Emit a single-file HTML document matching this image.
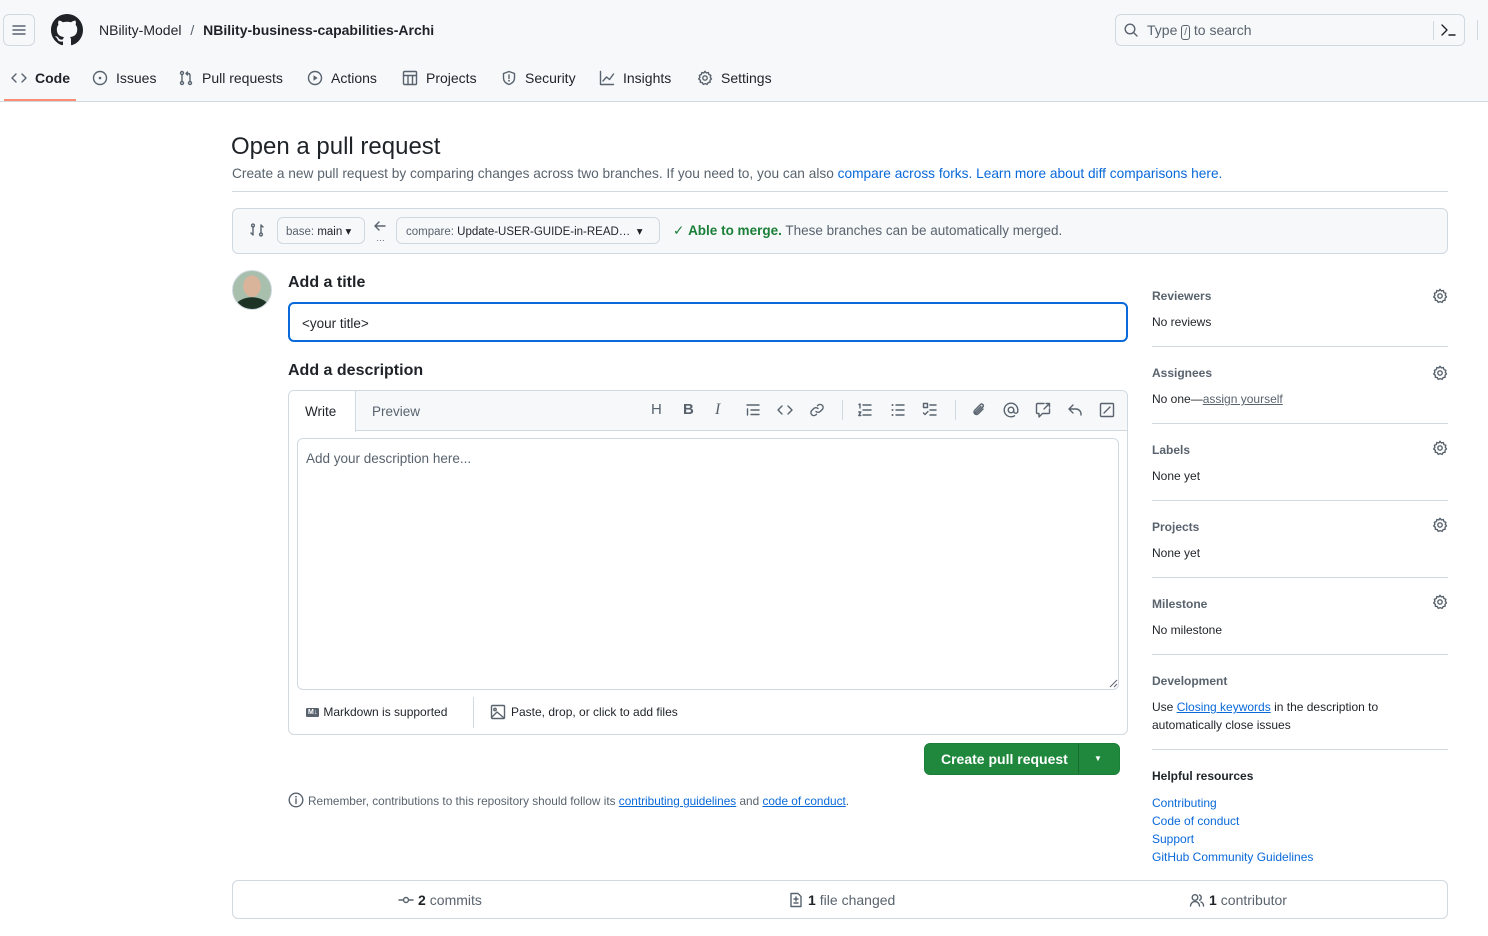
<!DOCTYPE html>
<html><head><meta charset="utf-8"><style>
*{box-sizing:border-box;margin:0;padding:0}
body{width:1488px;height:936px;overflow:hidden;background:#fff;font-family:"Liberation Sans",sans-serif;color:#1f2328;position:relative;font-size:13.5px}
.a{position:absolute;white-space:nowrap}
.hdr{position:absolute;left:0;top:0;width:1488px;height:102px;background:#f6f8fa;border-bottom:1px solid #d1d9e0}
svg{display:block}
.ic{fill:none;stroke:#59636e;stroke-width:1.4;stroke-linecap:round;stroke-linejoin:round}
.nav{position:absolute;top:70px;font-size:14px;color:#1f2328;display:flex;align-items:center;gap:8px}
.blue{color:#0969da}
.muted{color:#59636e}
.sb{font-size:12px}
.sbh{font-size:12px;color:#59636e;font-weight:600}
.hr{position:absolute;height:1px;background:#d1d9e0}
.gear{position:absolute;left:1432px}
</style></head><body>
<div class="hdr"></div>
<div class="a" style="left:3px;top:14px;width:32px;height:32px;border:1px solid #d1d9e0;border-radius:6px;background:#f6f8fa"></div>
<svg class="a" style="left:11px;top:22px" width="16" height="16"><path class="ic" d="M2 4h12M2 8h12M2 12h12"/></svg>
<svg class="a" style="left:51px;top:14px" width="32" height="32" viewBox="0 0 16 16"><path fill="#1f2328" d="M8 0C3.58 0 0 3.58 0 8c0 3.540 2.29 6.53 5.47 7.59.4.07.55-.17.55-.38 0-.19-.01-.82-.01-1.49-2.01.37-2.530-.49-2.69-.94-.09-.23-.48-.94-.82-1.130-.28-.15-.68-.52-.01-.53.63-.01 1.08.58 1.23.82.72 1.21 1.87.87 2.33.66.07-.52.28-.87.51-1.07-1.78-.2-3.64-.89-3.64-3.95 0-.87.31-1.59.82-2.15-.08-.2-.36-1.02.08-2.12 0 0 .67-.21 2.2.82.64-.18 1.32-.27 2-.27.68 0 1.36.09 2 .27 1.53-1.04 2.2-.82 2.2-.82.44 1.1.16 1.92.08 2.12.51.56.82 1.27.82 2.15 0 3.07-1.87 3.75-3.65 3.95.29.25.54.73.54 1.48 0 1.07-.01 1.93-.01 2.2 0 .21.15.46.55.38A8.013 8.013 0 0016 8c0-4.42-3.58-8-8-8z"/></svg>
<div class="a" style="left:99px;top:22px;font-size:14px">NBility-Model <span class="muted" style="margin:0 5px">/</span> <b style="font-weight:600">NBility-business-capabilities-Archi</b></div>
<div class="a" style="left:1115px;top:14px;width:350px;height:32px;border:1px solid #d1d9e0;border-radius:6px;background:#f6f8fa"></div>
<svg class="a" style="left:1123px;top:22px" width="16" height="16"><circle class="ic" cx="7" cy="7" r="4.8"/><path class="ic" d="M10.5 10.5l3.5 3.5"/></svg>
<div class="a muted" style="left:1147px;top:22px;font-size:14px">Type <span style="display:inline-block;border:1px solid #59636e;border-radius:3px;font-size:10px;padding:0 2px;line-height:13px">/</span> to search</div>
<div class="a" style="left:1433px;top:21px;width:1px;height:19px;background:#d1d9e0"></div>
<svg class="a" style="left:1440px;top:22px" width="18" height="16"><path class="ic" style="stroke:#1f2328" d="M2 3l5 5-5 5M9 13h6"/></svg>
<div class="a" style="left:1477px;top:20px;width:1px;height:20px;background:#d1d9e0"></div>
<div class="nav" style="left:11px"><svg width="16" height="16"><path class="ic" d="M5 4L1 8l4 4M11 4l4 4-4 4"/></svg><b style="font-weight:600">Code</b></div>
<div class="a" style="left:4px;top:99px;width:72px;height:2px;background:#fd8c73"></div>
<div class="nav" style="left:92px"><svg width="16" height="16"><circle class="ic" cx="8" cy="8" r="6.5"/><circle cx="8" cy="8" r="1.3" fill="#59636e"/></svg>Issues</div>
<div class="nav" style="left:178px"><svg width="16" height="16"><circle class="ic" cx="4" cy="3" r="1.5"/><circle class="ic" cx="4" cy="13" r="1.5"/><circle class="ic" cx="12" cy="13" r="1.5"/><path class="ic" d="M4 5v6M12 11V5.5Q12 3.5 10 3.5H8M9.5 2L8 3.5 9.5 5"/></svg>Pull requests</div>
<div class="nav" style="left:307px"><svg width="16" height="16"><circle class="ic" cx="8" cy="8" r="6.5"/><path d="M6.5 5.3v5.4L10.7 8z" fill="#59636e"/></svg>Actions</div>
<div class="nav" style="left:402px"><svg width="16" height="16"><rect class="ic" x="1.5" y="1.5" width="13" height="13" rx="1"/><path class="ic" d="M1.5 5.5h13M6 5.5v9M10.5 5.5v9"/></svg>Projects</div>
<div class="nav" style="left:501px"><svg width="16" height="16"><path class="ic" d="M8 1.5l5.5 2v4.5c0 3.5-2.8 5.5-5.5 6.5-2.7-1-5.5-3-5.5-6.5V3.5z"/><path class="ic" d="M8 5v3.5"/><circle cx="8" cy="10.8" r=".9" fill="#59636e"/></svg>Security</div>
<div class="nav" style="left:599px"><svg width="16" height="16"><path class="ic" d="M1.5 1.5v13h13M4 11l3.5-4 3 2.5L14.5 4"/></svg>Insights</div>
<div class="nav" style="left:697px"><svg width="16" height="16"><circle class="ic" cx="8" cy="8" r="2.2"/><path class="ic" d="M8 1.3l1.3 1.6 2-.4.6 2 1.9.8-.5 2 1.2 1.6-1.5 1.4.1 2-2 .3-1 1.8-1.9-.8-1.9.8-1-1.8-2-.3.1-2L1.7 8.9l1.2-1.6-.5-2 1.9-.8.6-2 2 .4z"/></svg>Settings</div>

<div class="a" style="left:231px;top:133px;font-size:24px">Open a pull request</div>
<div class="a muted" style="left:232px;top:166px;font-size:13.7px">Create a new pull request by comparing changes across two branches. If you need to, you can also <span class="blue">compare across forks.</span> <span class="blue">Learn more about diff comparisons here.</span></div>
<div class="hr" style="left:232px;top:191px;width:1216px"></div>
<div class="a" style="left:232px;top:208px;width:1216px;height:46px;background:#f6f8fa;border:1px solid #d1d9e0;border-radius:6px"></div>
<svg class="a" style="left:249px;top:222px" width="16" height="16"><circle class="ic" cx="4" cy="3.5" r="1.4"/><circle class="ic" cx="12" cy="12.5" r="1.4"/><path class="ic" d="M4 5v8l-2-2M12 11V3l2 2"/></svg>
<div class="a" style="left:277px;top:217px;width:88px;height:27px;border:1px solid #d1d9e0;border-radius:6px;background:#f6f8fa;font-size:11.5px;padding:6px 8px"><span class="muted">base:</span> main ▾</div>
<svg class="a" style="left:373px;top:220px" width="14" height="12"><path class="ic" d="M6 2L2 6l4 4M2 6h10"/></svg>
<div class="a muted" style="left:376px;top:233px;font-size:9px">…</div>
<div class="a" style="left:396px;top:217px;width:264px;height:27px;border:1px solid #d1d9e0;border-radius:6px;background:#f6f8fa;font-size:11.5px;padding:6px 9px"><span class="muted">compare:</span> Update-USER-GUIDE-in-READ… &nbsp;▾</div>
<div class="a" style="left:673px;top:223px;font-size:13.5px"><span style="color:#1a7f37">✓ <b style="font-weight:600">Able to merge.</b></span> <span class="muted">These branches can be automatically merged.</span></div>

<div class="a" style="left:232px;top:270px;width:40px;height:40px;border-radius:50%;background:radial-gradient(ellipse 9px 11px at 50% 40%,#d9b39a 0 95%,transparent 100%),radial-gradient(ellipse 18px 12px at 50% 100%,#1d3325 0 95%,transparent 100%),#a9bfae;overflow:hidden;border:1px solid #d1d9e0"></div>
<div class="a" style="left:288px;top:274px;font-size:16px;font-weight:600">Add a title</div>
<div class="a" style="left:288px;top:302px;width:840px;height:40px;border:2px solid #0969da;border-radius:6px;font-size:13.5px;padding:12px 12px">&lt;your title&gt;</div>
<div class="a" style="left:288px;top:362px;font-size:16px;font-weight:600">Add a description</div>
<div class="a" style="left:288px;top:390px;width:840px;height:345px;border:1px solid #d1d9e0;border-radius:6px;overflow:hidden">
 <div style="position:absolute;left:0;top:0;width:100%;height:40px;background:#f6f8fa;border-bottom:1px solid #d1d9e0"></div>
 <div style="position:absolute;left:0;top:0;width:67px;height:41px;background:#fff;border-right:1px solid #d1d9e0;font-size:13.5px;padding:13px 16px">Write</div>
 <div class="muted" style="position:absolute;left:83px;top:13px;font-size:13.5px">Preview</div>
 <div style="position:absolute;left:8px;top:47px;width:822px;height:252px;border:1px solid #d1d9e0;border-radius:6px;font-size:13.5px;color:#59636e;padding:12px 8px">Add your description here...</div>
 <div style="position:absolute;left:17px;top:314px;font-size:12px;display:flex;align-items:center;gap:4px"><span style="display:inline-block;background:#59636e;color:#fff;font-size:7px;font-weight:bold;padding:1px 2px;border-radius:1px">M↓</span>Markdown is supported</div>
 <div style="position:absolute;left:184px;top:306px;width:1px;height:31px;background:#d1d9e0"></div>
 <div style="position:absolute;left:201px;top:313px;font-size:12px;display:flex;align-items:center;gap:5px"><svg width="16" height="16"><rect class="ic" x="1.5" y="1.5" width="13" height="13" rx="1"/><circle class="ic" cx="5" cy="5.5" r="1.2"/><path class="ic" d="M2 13l5-5 7 6"/></svg>Paste, drop, or click to add files</div>
</div>
<div class="a muted" style="left:651px;top:401px;font-size:15px">H</div>
<div class="a muted" style="left:683px;top:401px;font-size:15px;font-weight:bold">B</div>
<div class="a muted" style="left:715px;top:401px;font-size:16px;font-style:italic;font-family:'Liberation Serif',serif">I</div>
<svg class="a" style="left:745px;top:402px" width="16" height="16"><path class="ic" d="M2 3h12M6 8h8M6 12.5h8M2.5 7v6"/></svg>
<svg class="a" style="left:777px;top:402px" width="16" height="16"><path class="ic" d="M5 4L1 8l4 4M11 4l4 4-4 4"/></svg>
<svg class="a" style="left:809px;top:402px" width="16" height="16"><path class="ic" d="M7 9.5a3 3 0 004.2 0l2.3-2.3a3 3 0 00-4.2-4.2L8.5 3.8M9 6.5a3 3 0 00-4.2 0L2.5 8.8a3 3 0 004.2 4.2l.8-.8"/></svg>
<div class="a" style="left:842px;top:400px;width:1px;height:20px;background:#d1d9e0"></div>
<svg class="a" style="left:857px;top:402px" width="16" height="16"><path class="ic" d="M6 3h8M6 8h8M6 13h8M2 2.5l1-.5v4M1.8 10h2l-2 3.5h2"/></svg>
<svg class="a" style="left:890px;top:402px" width="16" height="16"><path class="ic" d="M6 3h8M6 8h8M6 13h8"/><circle cx="2.5" cy="3" r="1" fill="#59636e"/><circle cx="2.5" cy="8" r="1" fill="#59636e"/><circle cx="2.5" cy="13" r="1" fill="#59636e"/></svg>
<svg class="a" style="left:922px;top:402px" width="16" height="16"><rect class="ic" x="1.5" y="1.5" width="4" height="4"/><path class="ic" d="M8 3h6M8 8h6M8 13h6M1.5 11l1.5 1.5 3-3"/></svg>
<div class="a" style="left:955px;top:400px;width:1px;height:20px;background:#d1d9e0"></div>
<svg class="a" style="left:971px;top:402px" width="16" height="16"><path class="ic" d="M12 7l-5 5a2.5 2.5 0 01-3.5-3.5l6-6a1.7 1.7 0 012.4 2.4l-6 6a.8.8 0 01-1.2-1.2L10 4.5"/></svg>
<svg class="a" style="left:1003px;top:402px" width="16" height="16"><circle class="ic" cx="8" cy="8" r="2.8"/><path class="ic" d="M10.8 8v1.2a2 2 0 004 0V8A6.8 6.8 0 108 14.8c1.3 0 2.5-.3 3.5-1"/></svg>
<svg class="a" style="left:1035px;top:402px" width="16" height="16"><path class="ic" d="M9 1.5H2.5a1 1 0 00-1 1v8a1 1 0 001 1H4V15l3.5-3.5h6a1 1 0 001-1V7M11 1.5h3.5V5M14.5 1.5L9 7"/></svg>
<svg class="a" style="left:1067px;top:402px" width="16" height="16"><path class="ic" d="M6 3L2 7l4 4M2 7h7a5 5 0 015 5v1"/></svg>
<svg class="a" style="left:1099px;top:402px" width="16" height="16"><rect class="ic" x="1.5" y="1.5" width="13" height="13" rx="1"/><path class="ic" d="M5 11l6-6"/></svg>
<svg class="a" style="left:1108px;top:678px" width="10" height="10"><path d="M9 2L2 9M9 6L6 9" stroke="#59636e" stroke-width="1"/></svg>

<div class="a" style="left:924px;top:743px;width:196px;height:32px;background:#1f883d;border-radius:6px;border:1px solid #1a7f37"></div>
<div class="a" style="left:941px;top:751px;font-size:14px;font-weight:600;color:#fff">Create pull request</div>
<div class="a" style="left:1078px;top:744px;width:1px;height:30px;background:#186c2f"></div>
<div class="a" style="left:1094px;top:754px;font-size:8px;color:#fff">▼</div>
<svg class="a" style="left:288px;top:792px" width="16" height="16"><circle class="ic" cx="8" cy="8" r="6.8"/><path class="ic" d="M8 7v4.5"/><circle cx="8" cy="4.8" r=".9" fill="#59636e"/></svg>
<div class="a muted" style="left:308px;top:794px;font-size:11.8px">Remember, contributions to this repository should follow its <span class="blue" style="text-decoration:underline">contributing guidelines</span> <span>and</span> <span class="blue" style="text-decoration:underline">code of conduct</span>.</div>

<div class="a sbh" style="left:1152px;top:289px">Reviewers</div><div class="a sb" style="left:1152px;top:315px">No reviews</div>
<div class="hr" style="left:1152px;top:346px;width:296px"></div>
<div class="a sbh" style="left:1152px;top:366px">Assignees</div><div class="a sb" style="left:1152px;top:392px">No one—<span class="muted" style="text-decoration:underline">assign yourself</span></div>
<div class="hr" style="left:1152px;top:423px;width:296px"></div>
<div class="a sbh" style="left:1152px;top:443px">Labels</div><div class="a sb" style="left:1152px;top:469px">None yet</div>
<div class="hr" style="left:1152px;top:500px;width:296px"></div>
<div class="a sbh" style="left:1152px;top:520px">Projects</div><div class="a sb" style="left:1152px;top:546px">None yet</div>
<div class="hr" style="left:1152px;top:577px;width:296px"></div>
<div class="a sbh" style="left:1152px;top:597px">Milestone</div><div class="a sb" style="left:1152px;top:623px">No milestone</div>
<div class="hr" style="left:1152px;top:654px;width:296px"></div>
<div class="a sbh" style="left:1152px;top:674px">Development</div>
<div class="a sb" style="left:1152px;top:698px;line-height:18px">Use <span class="blue" style="text-decoration:underline">Closing keywords</span> in the description to<br>automatically close issues</div>
<div class="hr" style="left:1152px;top:749px;width:296px"></div>
<div class="a" style="left:1152px;top:769px;font-size:12px;font-weight:600">Helpful resources</div>
<div class="a sb blue" style="left:1152px;top:794px;line-height:18px">Contributing<br>Code of conduct<br>Support<br>GitHub Community Guidelines</div>
<svg class="gear a" style="top:288px" width="16" height="16"><circle class="ic" cx="8" cy="8" r="2.2"/><path class="ic" d="M8 1.3l1.3 1.6 2-.4.6 2 1.9.8-.5 2 1.2 1.6-1.5 1.4.1 2-2 .3-1 1.8-1.9-.8-1.9.8-1-1.8-2-.3.1-2L1.7 8.9l1.2-1.6-.5-2 1.9-.8.6-2 2 .4z"/></svg>
<svg class="gear a" style="top:365px" width="16" height="16"><circle class="ic" cx="8" cy="8" r="2.2"/><path class="ic" d="M8 1.3l1.3 1.6 2-.4.6 2 1.9.8-.5 2 1.2 1.6-1.5 1.4.1 2-2 .3-1 1.8-1.9-.8-1.9.8-1-1.8-2-.3.1-2L1.7 8.9l1.2-1.6-.5-2 1.9-.8.6-2 2 .4z"/></svg>
<svg class="gear a" style="top:440px" width="16" height="16"><circle class="ic" cx="8" cy="8" r="2.2"/><path class="ic" d="M8 1.3l1.3 1.6 2-.4.6 2 1.9.8-.5 2 1.2 1.6-1.5 1.4.1 2-2 .3-1 1.8-1.9-.8-1.9.8-1-1.8-2-.3.1-2L1.7 8.9l1.2-1.6-.5-2 1.9-.8.6-2 2 .4z"/></svg>
<svg class="gear a" style="top:517px" width="16" height="16"><circle class="ic" cx="8" cy="8" r="2.2"/><path class="ic" d="M8 1.3l1.3 1.6 2-.4.6 2 1.9.8-.5 2 1.2 1.6-1.5 1.4.1 2-2 .3-1 1.8-1.9-.8-1.9.8-1-1.8-2-.3.1-2L1.7 8.9l1.2-1.6-.5-2 1.9-.8.6-2 2 .4z"/></svg>
<svg class="gear a" style="top:594px" width="16" height="16"><circle class="ic" cx="8" cy="8" r="2.2"/><path class="ic" d="M8 1.3l1.3 1.6 2-.4.6 2 1.9.8-.5 2 1.2 1.6-1.5 1.4.1 2-2 .3-1 1.8-1.9-.8-1.9.8-1-1.8-2-.3.1-2L1.7 8.9l1.2-1.6-.5-2 1.9-.8.6-2 2 .4z"/></svg>

<div class="a" style="left:232px;top:880px;width:1216px;height:39px;border:1px solid #d1d9e0;border-radius:6px"></div>
<div class="a muted" style="left:398px;top:892px;font-size:14px;display:flex;gap:4px;align-items:center"><svg width="16" height="16"><circle class="ic" cx="8" cy="8" r="2.5"/><path class="ic" d="M1 8h4.5M10.5 8H15"/></svg><b style="color:#1f2328;font-weight:600">2</b> commits</div>
<div class="a muted" style="left:788px;top:892px;font-size:14px;display:flex;gap:4px;align-items:center"><svg width="16" height="16"><path class="ic" d="M3 1.5h7l3 3v10H3zM8 5v4M6 7h4M6 11h4"/></svg><b style="color:#1f2328;font-weight:600">1</b> file changed</div>
<div class="a muted" style="left:1189px;top:892px;font-size:14px;display:flex;gap:4px;align-items:center"><svg width="16" height="16"><circle class="ic" cx="6" cy="5.5" r="2.8"/><path class="ic" d="M1.5 14a4.5 4.5 0 019 0M10.5 3a2.8 2.8 0 010 5.2M12 10a4 4 0 012.5 4"/></svg><b style="color:#1f2328;font-weight:600">1</b> contributor</div>
</body></html>
